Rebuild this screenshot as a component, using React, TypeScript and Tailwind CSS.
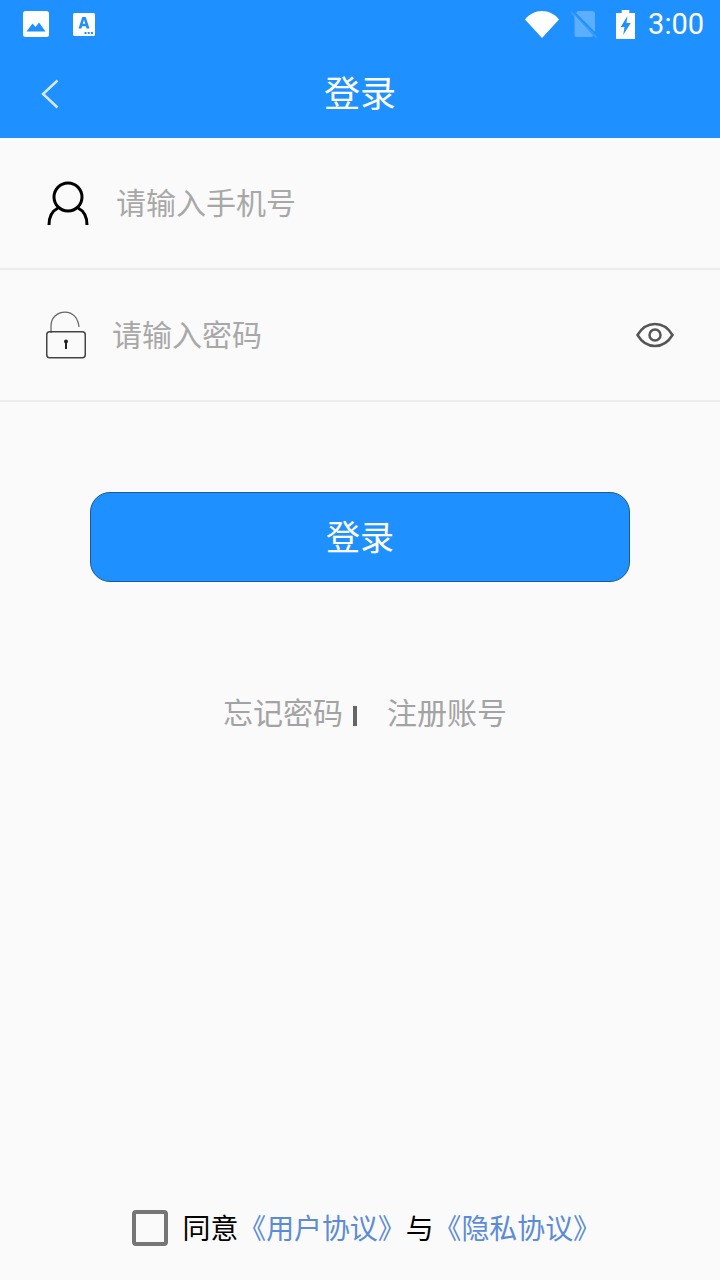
const cjk = "font-['Noto_Sans_CJK_SC','Noto_Sans',sans-serif]";

function StatusBar() {
  return (
    <div className="flex h-[48px] items-center justify-between pl-[23px] pr-[16px]">
      <div className="flex items-center gap-[24px]">
        <svg width="26" height="26" viewBox="0 0 26 26">
          <rect width="26" height="26" rx="2.5" fill="#fff" />
          <path d="M3.5 20.5 9.5 12.5 12.5 16 16 11.5 22.5 20.5Z" fill="#1e90ff" />
        </svg>
        <svg width="22" height="23" viewBox="0 0 22 23">
          <rect width="22" height="23" rx="1.5" fill="#fff" />
          <path d="M5.500 15.500 9.300 4h3.400l3.800 11.500h-3l-.6-2.200H9.100l-.6 2.200ZM9.800 10.800h2.400L11 6.800Z" fill="#1e90ff" />
          <rect x="11.500" y="19" width="2" height="2" fill="#1e90ff" />
          <rect x="14.700" y="19" width="2" height="2" fill="#1e90ff" />
          <rect x="17.900" y="19" width="2" height="2" fill="#1e90ff" />
        </svg>
      </div>
      <div className="flex items-center">
        <svg width="34" height="28" viewBox="0 0 36 28" preserveAspectRatio="none" className="mr-[12px]">
          <path d="M0 9.500C4.500 4 11 1 18 1s13.500 3 18 8.500L18 28Z" fill="#fff" />
        </svg>
        <svg width="28" height="28" viewBox="0 0 28 28" className="mr-[17px]">
          <path d="M6 2a1 1 0 0 1 1-1h14a3 3 0 0 1 3 3v18L5 3Z" fill="#fff" fillOpacity=".28" />
          <path d="M3.500 5.500 22 25.500a2 2 0 0 1-2 1.500H6a2.500 2.500 0 0 1-2.500-2.500Z" fill="#fff" fillOpacity=".28" />
          <path d="M0 2 26 28" stroke="#fff" strokeOpacity=".12" strokeWidth="2" />
        </svg>
        <svg width="19" height="29" viewBox="0 0 20 29" preserveAspectRatio="none" className="mr-[13px]">
          <path d="M6 0h8v3h6v26H0V3h6Z" fill="#fff" />
          <path d="M12 6 5 17h4l-1.500 8L15.500 13h-4.500Z" fill="#1e90ff" />
        </svg>
        <span className="font-['Roboto',sans-serif] text-[29px] leading-none text-white">3:00</span>
      </div>
    </div>
  );
}

export default function App() {
  return (
    <div className={`${cjk} flex h-[1280px] w-[720px] flex-col bg-[#fafafa]`}>
      <div className="h-[138px] bg-[#1e90ff]">
        <StatusBar />
        <div className="relative flex h-[90px] items-center justify-center">
          <svg width="18" height="30" viewBox="0 0 18 30" className="absolute left-[41px] top-[31px]">
            <path d="M16.500 1.500 2 15l14.500 13.500" fill="none" stroke="#d4e9ff" strokeWidth="2.500" />
          </svg>
          <span className="mb-[4px] text-[36px] leading-none text-white">登录</span>
        </div>
      </div>

      <div className="flex h-[132px] items-center border-b-2 border-[#ececec] pl-[46px]">
        <svg width="44" height="46" viewBox="0 0 44 46" className="mr-[27px] mt-[2px]">
          <circle cx="22" cy="16" r="14" fill="none" stroke="#000" strokeWidth="3" />
          <path d="M3 44c0-10 5-15 9-17M41 44c0-10-5-15-9-17" fill="none" stroke="#000" strokeWidth="3" />
        </svg>
        <span className="-ml-px mb-[4px] text-[30px] leading-none text-[#a8a8a8]">请输入手机号</span>
      </div>

      <div className="flex h-[132px] items-center border-b-2 border-[#ececec] px-[46px]">
        <svg width="40" height="48" viewBox="0 0 40 48" className="mr-[27px]">
          <path d="M5 22V15C5 7 11 1 19 1s13 6 14 15" fill="none" stroke="#666" strokeWidth="1.250" />
          <rect x="0.750" y="20.750" width="38.500" height="26" rx="3" fill="none" stroke="#444" strokeWidth="1.500" />
          <path d="M20 30v8" stroke="#222" strokeWidth="2" />
          <circle cx="20" cy="30.500" r="2" fill="#222" />
        </svg>
        <span className="-ml-px mb-[4px] flex-1 text-[30px] leading-none text-[#a8a8a8]">请输入密码</span>
        <svg width="38" height="26" viewBox="0 0 38 26">
          <path d="M1.500 13C6 5.500 12 2 19 2s13 3.500 17.500 11C32 20.500 26 24 19 24S6 20.500 1.500 13Z" fill="none" stroke="#555" strokeWidth="2.500" />
          <circle cx="19" cy="13" r="5.500" fill="none" stroke="#555" strokeWidth="2.500" />
        </svg>
      </div>

      <div className="mx-auto mt-[90px] flex h-[90px] w-[540px] items-center justify-center rounded-[20px] border border-[#1a5a99] bg-[#1e90ff] pb-[2px] text-[34px] leading-none text-white">
        登录
      </div>

      <div className="mt-[112px] flex h-[40px] items-center pl-[223px] text-[30px] leading-none text-[#a3a3a3]">
        <span className="mb-[6px]">忘记密码</span>
        <span className="ml-[10px] mr-[30px] mt-[4px] h-[20px] w-[4px] bg-[#666]" />
        <span className="mb-[6px]">注册账号</span>
      </div>

      <div className="mb-[30px] mt-auto flex h-[44px] items-center pl-[132px] text-[27.9px] leading-none">
        <span className="mr-[14.500px] h-[36px] w-[36px] rounded-[4px] border-[4px] border-[#757575]" />
        <span className="text-black">同意</span>
        <span className="text-[#5b8bd9]">《用户协议》</span>
        <span className="text-black">与</span>
        <span className="text-[#5b8bd9]">《隐私协议》</span>
      </div>
    </div>
  );
}
